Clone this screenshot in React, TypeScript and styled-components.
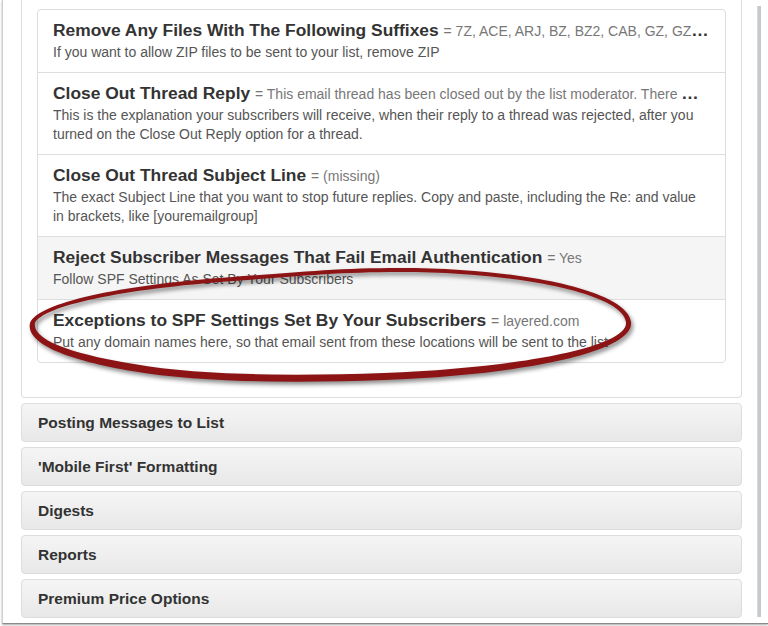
import React from "react";
import styled, { createGlobalStyle } from "styled-components";

const GlobalStyle = createGlobalStyle`
  html, body { margin: 0; padding: 0; background: #fff; }
  body { font-family: "Liberation Sans", Helvetica, Arial, sans-serif; }
  * { box-sizing: border-box; }
`;

const Stage = styled.div`
  position: relative;
  width: 768px;
  height: 626px;
  overflow: hidden;
  background: #fff;
`;

const Frame = styled.div`
  margin-left: 2px;
  height: 624px;
  display: flex;
  border-left: 1px solid #cfcfcf;
  border-bottom: 1px solid #8a8a8a;
  box-shadow: 0 1px 2px rgba(0, 0, 0, 0.35);
  background: #fff;
`;

const Main = styled.div`
  flex: 1;
  min-width: 0;
  display: flex;
  flex-direction: column;
  padding: 0 15px 0 18px;
`;

const SideBar = styled.div`
  flex: none;
  width: 4px;
  margin: 6px 7px 6px 0;
  background: #c6cacd;
  border-left: 1px solid #d6d9dc;
`;

const OpenPanel = styled.div`
  border: 1px solid #ddd;
  border-top: none;
  border-radius: 0 0 4px 4px;
  padding: 9px 15px 14px;
  background: #fff;
`;

const ListGroup = styled.div`
  display: flex;
  flex-direction: column;
  margin-bottom: 20px;
`;

const Item = styled.div<{ $muted?: boolean }>`
  min-width: 0;
  background: ${(p) => (p.$muted ? "#f5f5f5" : "#fff")};
  border: 1px solid #ddd;
  margin-bottom: -1px;
  padding: 10px 15px;
  &:first-child {
    border-top-left-radius: 4px;
    border-top-right-radius: 4px;
  }
  &:last-child {
    margin-bottom: 0;
    border-bottom-left-radius: 4px;
    border-bottom-right-radius: 4px;
  }
`;

const Heading = styled.h4`
  margin: 0 0 2px;
  font-size: 17.4px;
  font-weight: 700;
  line-height: 20px;
  color: #333;
  white-space: nowrap;
  overflow: hidden;
  text-overflow: ellipsis;
`;

const Value = styled.small`
  font-size: 14px;
  font-weight: 400;
  color: #777;
`;

const Desc = styled.p`
  margin: 0;
  font-size: 14px;
  line-height: 19px;
  color: #555;
`;

const AccordionHeading = styled.div`
  margin-top: 5px;
  border: 1px solid #ddd;
  border-radius: 4px;
  background: linear-gradient(to bottom, #f5f5f5 0%, #e8e8e8 100%);
  padding: 10px 16px;
`;

const AccordionTitle = styled.h4`
  margin: 0;
  font-size: 15.5px;
  font-weight: 700;
  line-height: 17px;
  color: #333;
`;

const Annotation = styled.svg`
  position: absolute;
  left: 0;
  top: 0;
  pointer-events: none;
  filter: drop-shadow(2px 3px 2px rgba(0, 0, 0, 0.45));
`;

type Setting = {
  title: string;
  value: string;
  desc: string;
  muted?: boolean;
  truncated?: boolean;
};

const settings: Setting[] = [
  {
    title: "Remove Any Files With The Following Suffixes",
    value: "= 7Z, ACE, ARJ, BZ, BZ2, CAB, GZ, GZ",
    desc: "If you want to allow ZIP files to be sent to your list, remove ZIP",
    truncated: true,
  },
  {
    title: "Close Out Thread Reply",
    value: "= This email thread has been closed out by the list moderator. There ",
    desc: "This is the explanation your subscribers will receive, when their reply to a thread was rejected, after you turned on the Close Out Reply option for a thread.",
    truncated: true,
  },
  {
    title: "Close Out Thread Subject Line",
    value: "= (missing)",
    desc: "The exact Subject Line that you want to stop future replies. Copy and paste, including the Re: and value in brackets, like [youremailgroup]",
  },
  {
    title: "Reject Subscriber Messages That Fail Email Authentication",
    value: "= Yes",
    desc: "Follow SPF Settings As Set By Your Subscribers",
    muted: true,
  },
  {
    title: "Exceptions to SPF Settings Set By Your Subscribers",
    value: "= layered.com",
    desc: "Put any domain names here, so that email sent from these locations will be sent to the list",
  },
];

const sections = [
  "Posting Messages to List",
  "'Mobile First' Formatting",
  "Digests",
  "Reports",
  "Premium Price Options",
];

const outer =
  "M 30 323 C 38 303, 118 285, 233 277 C 300 272, 340 268, 400 268 C 522 268, 628 291, 631 322 C 635 352, 522 375, 384 380 C 300 383, 200 383, 132 371 C 78 362, 25 346, 30 323 Z";
const inner =
  "M 35 323 C 43 306, 121 289, 234 281 C 300 276, 340 272, 400 272 C 518 272, 623 294, 626 322 C 629 347, 518 368, 384 373 C 300 376, 200 376, 134 364 C 83 356, 31 342, 35 323 Z";

export default function App() {
  return (
    <Stage>
      <GlobalStyle />
      <Frame>
        <Main>
          <OpenPanel>
            <ListGroup>
              {settings.map((s) => (
                <Item key={s.title} $muted={s.muted}>
                  <Heading>
                    {s.title} <Value>{s.value}</Value>
                    {s.truncated ? "…" : null}
                  </Heading>
                  <Desc>{s.desc}</Desc>
                </Item>
              ))}
            </ListGroup>
          </OpenPanel>
          {sections.map((t) => (
            <AccordionHeading key={t}>
              <AccordionTitle>{t}</AccordionTitle>
            </AccordionHeading>
          ))}
        </Main>
        <SideBar />
      </Frame>
      <Annotation width="768" height="626" viewBox="0 0 768 626">
        <path d={`${outer} ${inner}`} fill="#8c1414" fillRule="evenodd" />
      </Annotation>
    </Stage>
  );
}
